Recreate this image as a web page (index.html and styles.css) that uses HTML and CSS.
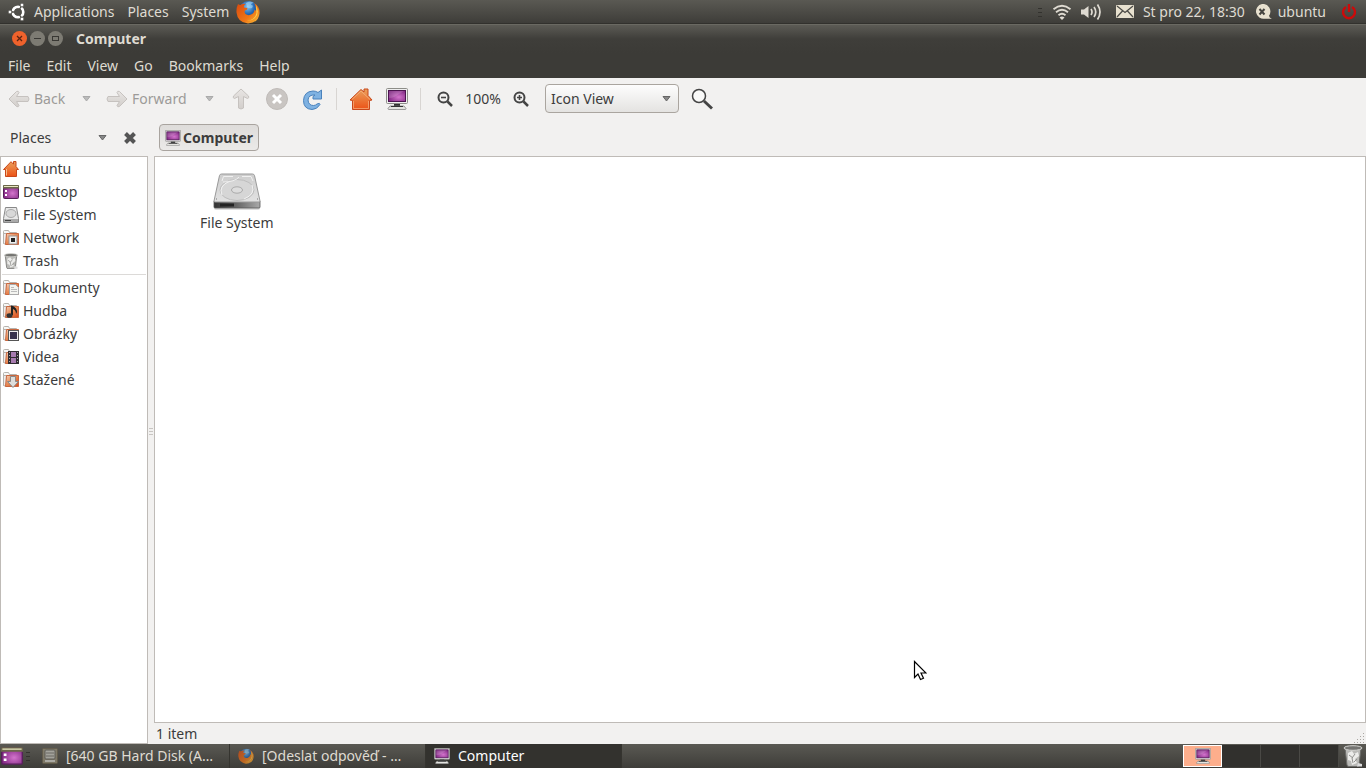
FILE: index.html
```
<!DOCTYPE html>
<html lang="en">
<head>
	<meta charset="utf-8">
	<title>Computer</title>
	<link rel="stylesheet" href="styles.css">
</head>
<body>
	<!-- shared icons -->
	<svg class="defs" width="0" height="0" aria-hidden="true">
		<defs>
			<linearGradient id="orange" x1="0" y1="0" x2="0" y2="1"><stop offset="0" stop-color="#eba05c"/><stop offset="1" stop-color="#ec5216"/></linearGradient>
			<linearGradient id="tan" x1="0" y1="0" x2="1" y2="1"><stop offset="0" stop-color="#f4d3bd"/><stop offset=".5" stop-color="#e8864f"/><stop offset="1" stop-color="#d8481a"/></linearGradient>
			<radialGradient id="purple" cx=".6" cy=".6" r=".7"><stop offset="0" stop-color="#d374cc"/><stop offset="1" stop-color="#79207c"/></radialGradient>
			<linearGradient id="metal" x1="0" y1="0" x2="0" y2="1"><stop offset="0" stop-color="#cdcdcd"/><stop offset="1" stop-color="#e2e2e2"/></linearGradient>
			<linearGradient id="edge" x1="0" y1="0" x2="1" y2="0"><stop offset="0" stop-color="#333"/><stop offset=".5" stop-color="#666"/><stop offset="1" stop-color="#aaa"/></linearGradient>
			<linearGradient id="faded" x1="0" y1="0" x2="0" y2="1"><stop offset="0" stop-color="#e8e5e3"/><stop offset="1" stop-color="#d2cecb"/></linearGradient>
			<radialGradient id="globe" cx=".45" cy=".3" r=".7"><stop offset="0" stop-color="#7fc4f2"/><stop offset=".5" stop-color="#2468b4"/><stop offset="1" stop-color="#142c66"/></radialGradient>
			<linearGradient id="fox" x1="0" y1="0" x2="1" y2="1"><stop offset="0" stop-color="#d9480f"/><stop offset=".6" stop-color="#ef7616"/><stop offset="1" stop-color="#fbc53c"/></linearGradient>
		</defs>
		<symbol id="computer" viewBox="0 0 22 22">
			<rect x=".5" y=".5" width="21" height="15" rx="1" fill="#eee" stroke="#8d8d88"/>
			<rect x="2.500" y="2.500" width="17" height="11" fill="url(#purple)" stroke="#4c1450"/>
			<path d="M3 3H18L9 8.500Q6 10 3 10Z" fill="#fff" opacity=".15"/>
			<path d="M8 16h6v2.500H8z" fill="#333"/>
			<path d="M4 18h14l2 2.500q0 1-1 1H3q-1 0-1-1z" fill="#e4e4e0" stroke="#777" stroke-width=".7"/>
			<path d="M5 18.500h12" stroke="#333"/>
		</symbol>
		<symbol id="home" viewBox="0 0 24 24">
			<path d="M3.500 13.500v9h17v-9l2.500-.5L19 8.500V2h-4v3l-3-2.500L1 13z" fill="url(#orange)" stroke="#c8481a" stroke-linejoin="round"/>
			<path d="M3 12.500 12 4l9 8.500M4.500 14v7.500h15V14" fill="none" stroke="#f8bd8d" stroke-width=".8" opacity=".8"/>
		</symbol>
		<symbol id="home-small" viewBox="0 0 16 16">
			<path d="M2.500 8.500v7h11v-7h2L13 5.500V.5h-2.500v2.700L8 .7.500 8.500z" fill="url(#orange)" stroke="#c8481a" stroke-linejoin="round"/>
			<path d="M3.500 8v6.500" stroke="#f8bd8d"/>
		</symbol>
		<symbol id="drive" viewBox="0 0 48 38">
			<path d="M1 33h46v2q0 2-2 2H3q-2 0-2-2z" fill="#bbb" opacity=".5"/>
			<path d="M1 28h46v6q0 1-1 1H2q-1 0-1-1z" fill="url(#edge)" stroke="#555" stroke-width=".8"/>
			<path d="M8.500 1h31q1.500 0 2 1.500L47 28q0 1-1 1H2q-1 0-1-1L6.500 2.500Q7 1 8.500 1z" fill="url(#metal)" stroke="#999"/>
			<ellipse cx="24" cy="17" rx="17" ry="10.500" fill="#d6d6d6" stroke="#bdbdbd"/>
			<path d="M9 22q-4-9 8-14M39 12q4 9-8 14" fill="none" stroke="#f2f2f2"/>
			<ellipse cx="24" cy="17" rx="5.500" ry="3.200" fill="#ddd" stroke="#aaa"/>
			<path d="M9 8 10.500 3.500H20M29 3.500h9L40 8M10 9q12 0 16-5" fill="none" stroke="#f0f0f0"/>
			<path d="M7 30.500h14v3H7z" fill="#222"/>
			<path d="M3 26h1M44 26h1" stroke="#777"/>
		</symbol>
		<symbol id="desktop" viewBox="0 0 16 16">
			<rect x=".5" y="1.500" width="15" height="13" rx="1" fill="url(#purple)" stroke="#56205a"/>
			<path d="M0 4.500V2q0-1 1-1h14q1 0 1 1v2.500z" fill="#6b684a"/>
			<path d="M1 2.500h14" stroke="#e9e6c2"/>
			<path d="M2 6h2v2H2zM2 10h2v2H2z" fill="#fff"/>
		</symbol>
		<symbol id="folder" viewBox="0 0 16 16">
			<path d="M.5 13.500v-12q0-1 1-1h4l1 2h7v3" fill="#f7f7f5" stroke="#b5b2ad"/>
			<path d="M.5 13.500v-10h3v11z" fill="#eee" stroke="#b5b2ad"/>
			<path d="M3.500 3.500h12v11h-13z" fill="url(#tan)" stroke="#c8673f"/>
		</symbol>
		<symbol id="trash" viewBox="0 0 20 22">
			<path d="M2 3h16l-2 17q-.2 1.500-2 1.500H6q-1.800 0-2-1.500z" fill="#b9b9b6" stroke="#6c6c69"/>
			<path d="M5 8l4-2 2 3 4-2 1 4-4 3 2 4-5 2-1-4-3-1z" fill="#ececea"/>
			<path d="M6 10l4 3M12 9l-3 4 1 5M14 14l-3 3" stroke="#90908d" fill="none"/>
			<ellipse cx="10" cy="3" rx="9" ry="2.300" fill="#747471" stroke="#d5d5d2"/>
			<path d="M15 18l4 1v2.500h-5z" fill="#ddd"/>
		</symbol>
		<symbol id="firefox" viewBox="0 0 24 24">
			<circle cx="12.500" cy="11" r="10" fill="url(#globe)"/>
			<path d="M10 3q4-3 8 0-3 0-3 2 3 0 1 3-3 1-5-1z" fill="#a9dbf6" opacity=".6"/>
			<path d="M2 4Q3 5 4.500 5 7 3 9.500 4 7.500 5.500 8 7.500L11.500 8Q11.500 10 9 10.500 8 12 9.500 14 12 16 15 14.500 18.500 13 18.500 9.500 19.500 10 20 11 20.500 6.500 18 3 24 6.500 23.500 13.500 22.500 23 12 23.500 1.500 22.500.5 12.500.2 8 2 4z" fill="url(#fox)"/>
			<path d="M20 5q4 8-1 13-4 3.500-8 3Q19 20 20.500 13z" fill="#fcd34d"/>
		</symbol>
		<symbol id="grip" viewBox="0 0 5 10">
			<path d="M0 1.500h4M0 5.500h4M0 9.500h4" stroke="#33322e"/>
		</symbol>
	</svg>

	<header class="panel top-panel">
		<nav class="panel-menus">
			<svg class="logo" width="18" height="18" viewBox="0 0 18 18">
				<circle cx="10" cy="9" r="5.200" fill="none" stroke="#fff" stroke-width="2.800"/>
				<path d="M10 9H1M10 9l4.500-8M10 9l4.500 8" stroke="#504f4a" stroke-width="1.300"/>
				<circle cx="10" cy="9" r="3.600" fill="#504f4a"/>
				<g fill="#fff" stroke="#504f4a"><circle cx="2" cy="9" r="2"/><circle cx="14" cy="2" r="2"/><circle cx="14" cy="16" r="2"/></g>
			</svg>
			<button>Applications</button>
			<button>Places</button>
			<button>System</button>
			<a href="#" class="launcher" aria-label="Firefox"><svg width="24" height="24"><use href="#firefox"/></svg></a>
		</nav>
		<div class="indicators">
			<svg width="5" height="10"><use href="#grip"/></svg>
			<button aria-label="Wireless"><svg width="20" height="18" viewBox="0 0 20 18" fill="none" stroke="#dfdbd2" stroke-width="1.800"><path d="M1.500 6.200q8.500-7 17 0M4 9.300q6-5 12 0M6.500 12.300q3.500-3 7 0"/><path d="M7.500 14.500q2.500-2 5 0L10 17z" fill="#dfdbd2" stroke="none"/></svg></button>
			<button class="volume" aria-label="Volume"><svg width="21" height="18" viewBox="0 0 21 18" fill="none" stroke="#dfdbd2" stroke-width="1.700"><path d="M0 6.500h3L7.500 3v12L3 11.500H0z" fill="#dfdbd2" stroke="none"/><path d="M10 6q2 3 0 6M13 4q3.500 5 0 10M16.500 1.500q5 7.500 0 15"/></svg></button>
			<button aria-label="Messages"><svg width="18" height="14" viewBox="0 0 18 14"><rect width="18" height="13" rx="1" fill="#e8e1cf"/><path d="M1 1l8 6.500L17 1M1 12l5.500-6M17 12l-5.500-6" fill="none" stroke="#4b4a45" stroke-width="1.200"/></svg></button>
			<button>St pro 22, 18:30</button>
			<button class="user"><svg width="18" height="16" viewBox="0 0 18 16"><path d="M8 0a7.500 7.500 0 1 0 3 14.700h7q-3-1-3-3A7.500 7.500 0 0 0 8 0z" fill="#e8e1cf"/><path d="M5.500 5l5 5.500M10.500 5l-5 5.500" stroke="#45443f" stroke-width="2"/></svg>ubuntu</button>
			<button class="power" aria-label="Shut down"><svg width="16" height="16" viewBox="0 0 16 16" fill="none" stroke="#cc0a0a" stroke-width="2.400"><path d="M5 3A6 6 0 1 0 11 3M8 0v8"/></svg></button>
		</div>
	</header>

	<div class="titlebar">
		<div class="window-buttons">
			<button class="close" aria-label="Close"><svg width="15" height="15" viewBox="0 0 15 15"><path d="M5 5l5 5M10 5l-5 5" stroke="#5b2412" stroke-width="1.300"/></svg></button>
			<button aria-label="Minimize"><svg width="15" height="15" viewBox="0 0 15 15"><path d="M4 7.500h7" stroke="#393834"/></svg></button>
			<button aria-label="Maximize"><svg width="15" height="15" viewBox="0 0 15 15"><rect x="4.500" y="5.500" width="6" height="4" fill="none" stroke="#393834"/></svg></button>
		</div>
		<h1>Computer</h1>
	</div>
	<nav class="menubar">
		<button>File</button>
		<button>Edit</button>
		<button>View</button>
		<button>Go</button>
		<button>Bookmarks</button>
		<button>Help</button>
	</nav>

	<div class="toolbar">
		<button class="back" disabled><svg width="22" height="18" viewBox="0 0 22 18"><path d="M1 9l7.500-7.500q2-1 2.500 1L8.500 6.500H20q2 2.500 0 5H8.500l2.500 4q-.5 2-2.500 1z" fill="url(#faded)" stroke="#c6c2bf"/></svg>Back</button>
		<button class="history" disabled aria-label="Back history"><svg width="9" height="6" viewBox="0 0 9 6"><path d="M1 .5h7l-3.500 4.500z" fill="#bbb" stroke="#aaa"/></svg></button>
		<button class="forward" disabled><svg width="22" height="18" viewBox="0 0 22 18"><path d="M21 9l-7.500-7.500q-2-1-2.500 1l2.500 4H2q-2 2.500 0 5h11.500l-2.500 4q.5 2 2.500 1z" fill="url(#faded)" stroke="#c6c2bf"/></svg>Forward</button>
		<button class="history" disabled aria-label="Forward history"><svg width="9" height="6" viewBox="0 0 9 6"><path d="M1 .5h7l-3.500 4.500z" fill="#bbb" stroke="#aaa"/></svg></button>
		<button class="tool up" disabled aria-label="Up"><svg width="18" height="22" viewBox="0 0 18 22"><path d="M9 1l7.500 7q1 2-1 2.500l-4-2V20q-2.500 2-5 0V8.500l-4 2q-2-.5-1-2.500z" fill="url(#faded)" stroke="#c6c2bf"/></svg></button>
		<button class="tool" disabled aria-label="Stop"><svg width="22" height="22" viewBox="0 0 22 22"><circle cx="11" cy="11" r="10.500" fill="#c9c5c2" stroke="#bfbbb8"/><path d="M7 7l8 8M15 7l-8 8" stroke="#fff" stroke-width="3"/></svg></button>
		<button class="tool" aria-label="Reload"><svg width="22" height="22" viewBox="0 0 22 22"><path d="M18 16.500Q15 21.500 10 21.500 1.500 21 1.500 12.500 2 3.500 11 3q3 0 5 1.500L19.500 2v9H11V8.500l2-1.500Q6.500 6.500 6 12q.5 5.500 5.500 5.500 2 0 3.500-1.500 3-1.500 3 .5z" fill="#7fb2e2" stroke="#4a82bc"/></svg></button>
		<span class="separator"></span>
		<button class="tool" aria-label="Home"><svg width="24" height="24"><use href="#home"/></svg></button>
		<button class="tool" aria-label="Computer"><svg width="22" height="22"><use href="#computer"/></svg></button>
		<span class="separator"></span>
		<button class="tool" aria-label="Zoom out"><svg width="16" height="16" viewBox="0 0 16 16" fill="none" stroke="#444"><circle cx="6.500" cy="6.500" r="5" stroke-width="2"/><path d="M4 6.500h5" stroke-width="1.600"/><path d="M10.500 10.500l4.500 4.500" stroke-width="2.500"/></svg></button>
		<button class="zoom-level">100%</button>
		<button class="tool" aria-label="Zoom in"><svg width="16" height="16" viewBox="0 0 16 16" fill="none" stroke="#444"><circle cx="6.500" cy="6.500" r="5" stroke-width="2"/><path d="M4 6.500h5M6.500 4v5" stroke-width="1.600"/><path d="M10.500 10.500l4.500 4.500" stroke-width="2.500"/></svg></button>
		<div class="view-select">
			<select aria-label="View"><option>Icon View</option><option>List View</option><option>Compact View</option></select>
			<svg width="9" height="6" viewBox="0 0 9 6"><path d="M1 .5h7l-3.500 4.500z" fill="#888" stroke="#666"/></svg>
		</div>
		<button class="tool" aria-label="Search"><svg width="22" height="22" viewBox="0 0 22 22" fill="none" stroke="#444"><circle cx="8" cy="8" r="6.500" fill="#f9f9f8" stroke-width="1.500"/><path d="M13 13l8 7.500" stroke-width="3"/></svg></button>
	</div>

	<main class="window">
		<aside class="side">
			<div class="side-header">
				<button class="side-menu">Places <svg width="9" height="6" viewBox="0 0 9 6"><path d="M1 .5h7l-3.500 4.500z" fill="#888" stroke="#666"/></svg></button>
				<button class="side-close" aria-label="Close side pane"><svg width="14" height="14" viewBox="0 0 14 14"><path d="M2.500 2.500l9 9M11.500 2.500l-9 9" stroke="#555" stroke-width="4"/></svg></button>
			</div>
			<div class="places">
				<a href="#"><svg width="16" height="16"><use href="#home-small"/></svg>ubuntu</a>
				<a href="#"><svg width="16" height="16"><use href="#desktop"/></svg>Desktop</a>
				<a href="#"><svg width="16" height="16" viewBox="0 0 16 16"><path d="M2.500.5h11l2 11v4H.5v-4z" fill="#e8e8e8" stroke="#888"/><ellipse cx="8" cy="6.500" rx="5" ry="4" fill="#d8d8d8" stroke="#aaa"/><path d="M1 12h14v3H1z" fill="#aaa"/><path d="M2 13.500h6" stroke="#444"/></svg>File System</a>
				<a href="#"><svg width="16" height="16"><use href="#folder"/><rect x="6" y="6" width="8" height="8" fill="#eee" stroke="#999"/><rect x="8" y="8" width="4" height="4" fill="#222"/></svg>Network</a>
				<a href="#"><svg width="16" height="16"><use href="#trash"/></svg>Trash</a>
				<hr>
				<a href="#"><svg width="16" height="16"><use href="#folder"/><path d="M6.500 4.500h6l3 3v7h-9z" fill="#f4f4f0" stroke="#aaa"/><path d="M8 7.500h3M8 9.500h6M8 11.500h6" stroke="#bbb"/></svg>Dokumenty</a>
				<a href="#"><svg width="16" height="16"><use href="#folder"/><path d="M8 12V2.500l2 .5q4 2 4 6l-1 2q0-4-3-5v6z" fill="#222"/><ellipse cx="6.500" cy="12.500" rx="3" ry="2.300" fill="#333"/></svg>Hudba</a>
				<a href="#"><svg width="16" height="16"><use href="#folder"/><rect x="5.500" y="4.500" width="10" height="10" fill="#eee" stroke="#555"/><rect x="7" y="6" width="7" height="7" fill="#37324c"/></svg>Obrázky</a>
				<a href="#"><svg width="16" height="16"><use href="#folder"/><rect x="5" y="2" width="11" height="13" fill="#302c32"/><path d="M8 3h5v5H8zM8 9h5v5H8z" fill="#a77bb0"/><path d="M6.500 3v12M14.500 3v12" stroke="#aaa" stroke-dasharray="1 2"/></svg>Videa</a>
				<a href="#"><svg width="16" height="16"><use href="#folder"/><path d="M7.500 4.500h5v5h3L10 15.500 4.500 9.500h3z" fill="#dededc" stroke="#888"/></svg>Stažené</a>
			</div>
		</aside>
		<div class="splitter"><svg width="4" height="8" viewBox="0 0 4 8"><path d="M0 .5h4M0 3.500h4M0 6.500h4" stroke="#c8c5c2"/></svg></div>
		<section class="browser">
			<div class="pathbar">
				<button><svg width="16" height="16"><use href="#computer"/></svg>Computer</button>
			</div>
			<div class="files">
				<a href="#" class="file"><svg width="48" height="38"><use href="#drive"/></svg>File System</a>
			</div>
			<div class="statusbar">
				<span>1 item</span>
				<svg width="12" height="12" viewBox="0 0 12 12"><path d="M9 1.500h3M6 4.500h6M3 7.500h9M0 10.500h12" stroke="#aaa7a3" stroke-dasharray="1 2"/></svg>
			</div>
		</section>
	</main>

	<footer class="panel bottom-panel">
		<button class="show-desktop" aria-label="Show desktop"><svg width="22" height="20" viewBox="0 0 16 16" preserveAspectRatio="none"><use href="#desktop"/></svg></button>
		<svg class="task-grip" width="5" height="10"><use href="#grip"/></svg>
		<div class="tasks">
			<button class="minimized"><svg width="16" height="16" viewBox="0 0 16 16"><rect x=".5" y=".5" width="15" height="15" rx="1" fill="#958d77" stroke="#6c634f"/><rect x="3" y="2" width="10" height="9" rx="1" fill="#c8c7bf" stroke="#65635d"/><path d="M4 5h8M4 8h8" stroke="#77756f"/><path d="M3 12h10v2H3z" fill="#d6d5ce"/></svg>[640 GB Hard Disk (A…</button>
			<button class="minimized"><svg width="16" height="16"><use href="#firefox"/></svg>[Odeslat odpověď - …</button>
			<button class="active"><svg width="16" height="16"><use href="#computer"/></svg>Computer</button>
		</div>
		<div class="pager">
			<button class="current" aria-label="Workspace 1"><svg width="16" height="16"><use href="#computer"/></svg></button>
			<button aria-label="Workspace 2"></button>
			<button aria-label="Workspace 3"></button>
			<button aria-label="Workspace 4"></button>
		</div>
		<button class="bin" aria-label="Trash"><svg width="20" height="22"><use href="#trash"/></svg></button>
	</footer>

	<svg class="pointer" width="14" height="22" viewBox="0 0 14 22"><path d="M1.500 1.500v16l3.500-3.500 2.500 5.500 3-1.300-2.500-5.200H13z" fill="#fff" stroke="#000" stroke-width="1.200"/></svg>
</body>
</html>
```
FILE: styles.css
```
* {
	box-sizing: border-box;
}
body {
	margin: 0;
	height: 100vh;
	display: flex;
	flex-direction: column;
	overflow: hidden;
	background: #f2f1f0;
	color: #3c3c3c;
	font: 14px/20px "Noto Sans", sans-serif;
}
svg {
	display: block;
	flex: none;
}
button {
	display: flex;
	align-items: center;
	margin: 0;
	padding: 0;
	border: 0;
	background: none;
	color: inherit;
	font: inherit;
	white-space: nowrap;
}
a {
	color: inherit;
	text-decoration: none;
}
.defs {
	position: absolute;
}

/* panels */
.panel {
	display: flex;
	align-items: center;
	flex: none;
	height: 24px;
	background: linear-gradient(#5a5953, #3e3d39);
	color: #dfdbd2;
}
.top-panel {
	justify-content: space-between;
	border-bottom: 1px solid #32312d;
}
.panel-menus, .indicators {
	display: flex;
	align-items: center;
}
.panel-menus {
	gap: 13px;
	padding-left: 8px;
}
.panel-menus .logo {
	margin-right: -5px;
}
.launcher {
	margin-left: -6px;
}
.indicators {
	padding-right: 9px;
	gap: 9px;
}
.indicators .volume {
	margin-right: 5px;
}
.indicators .user {
	gap: 6px;
}
.indicators .power {
	margin-left: 6px;
}

/* window frame */
.titlebar {
	display: flex;
	align-items: center;
	flex: none;
	height: 29px;
	padding: 0 12px 1px;
	gap: 13px;
	background: linear-gradient(#5c5b55, #3f3e3a 50%, #3c3b37);
	border-top: 1px solid #6a6962;
	color: #dfdbd2;
}
.titlebar h1 {
	margin: 0;
	font-size: 14px;
}
.window-buttons {
	display: flex;
	gap: 3px;
}
.window-buttons button {
	border-radius: 50%;
	background: #7d7b73;
}
.window-buttons .close {
	background: #ef622c;
}
.menubar {
	display: flex;
	align-items: center;
	flex: none;
	height: 25px;
	padding-left: 8px;
	gap: 16px;
	background: #3c3b37;
	color: #dfdbd2;
}

/* toolbar */
.toolbar {
	display: flex;
	align-items: center;
	flex: none;
	height: 41px;
}
.toolbar button:disabled {
	color: #9d9b99;
}
.back, .forward {
	padding-left: 8px;
	gap: 4px;
}
.back {
	width: 74px;
}
.forward {
	width: 99px;
}
.history {
	width: 24px;
	justify-content: center;
}
.tool {
	width: 36px;
	justify-content: center;
}
.up {
	margin-left: 2px;
}
.separator {
	width: 1px;
	height: 22px;
	margin: 0 6px 0 5px;
	background: #d8d5d2;
}
.zoom-level {
	width: 40px;
	justify-content: center;
}
.view-select {
	position: relative;
	margin: 0 5px 0 6px;
}
.view-select select {
	width: 134px;
	height: 29px;
	padding: 0 5px;
	border: 1px solid #aaa59f;
	border-radius: 4px;
	appearance: none;
	background: linear-gradient(#fdfdfd, #e4e3e1);
	color: #3c3c3c;
	font: inherit;
}
.view-select svg {
	position: absolute;
	top: 12px;
	right: 8px;
	pointer-events: none;
}

/* side pane and file area */
.window {
	display: flex;
	flex: 1;
	min-height: 0;
}
.side {
	display: flex;
	flex-direction: column;
	width: 148px;
}
.side-header {
	display: flex;
	align-items: center;
	height: 37px;
	padding: 0 11px 0 10px;
	gap: 16px;
}
.side-menu {
	flex: 1;
	justify-content: space-between;
}
.places {
	flex: 1;
	border: 1px solid #bfbbb7;
	background: #fff;
}
.places a {
	display: flex;
	align-items: center;
	height: 23px;
	padding-left: 2px;
	gap: 4px;
}
.places hr {
	margin: 2px 1px 1px;
	border: 0;
	border-top: 1px solid #dcdad8;
}
.splitter {
	display: flex;
	align-items: center;
	justify-content: center;
	width: 6px;
}
.browser {
	display: flex;
	flex-direction: column;
	flex: 1;
	min-width: 0;
}
.pathbar {
	display: flex;
	align-items: center;
	height: 37px;
	padding-left: 5px;
}
.pathbar button {
	height: 27px;
	padding: 0 5px;
	gap: 2px;
	border: 1px solid #a9a49f;
	border-radius: 4px;
	background: linear-gradient(#dedcda, #ebeae8);
	font-weight: bold;
}
.files {
	flex: 1;
	padding: 16px 45px;
	border: 1px solid #bfbbb7;
	background: #fff;
}
.file {
	display: inline-flex;
	flex-direction: column;
	align-items: center;
	gap: 2px;
}
.statusbar {
	display: flex;
	justify-content: space-between;
	align-items: flex-end;
	height: 21px;
	padding-left: 2px;
}

/* taskbar */
.show-desktop {
	width: 24px;
	justify-content: center;
}
.task-grip {
	margin: 0 3px 0 2px;
}
.tasks {
	display: flex;
	flex: 1;
}
.tasks button {
	width: 196px;
	height: 24px;
	padding-left: 8px;
	gap: 8px;
	border-right: 1px solid #35342f;
}
.tasks .minimized svg {
	opacity: .7;
}
.tasks .active {
	background: #33322e;
	color: #fff;
}
.pager {
	display: flex;
	height: 22px;
	margin-right: 4px;
}
.pager button {
	width: 39px;
	justify-content: center;
	border-right: 1px solid #4a4945;
	background: #31302d;
}
.pager .current {
	border: 1px solid #fff;
	background: #fdae8c;
}
.bin {
	margin-right: 3px;
}

.pointer {
	position: absolute;
	top: 660px;
	left: 913px;
}
```
